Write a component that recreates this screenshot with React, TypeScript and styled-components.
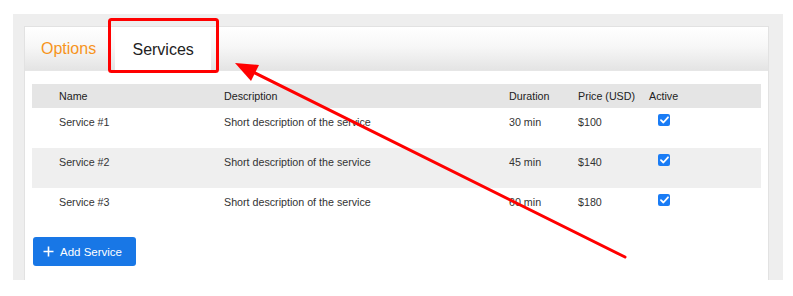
import React from "react";
import styled, { createGlobalStyle } from "styled-components";

const Global = createGlobalStyle`
  html, body { margin: 0; padding: 0; background: #ffffff; }
  body { font-family: "Liberation Sans", Arial, Helvetica, sans-serif; }
  * { box-sizing: border-box; }
`;

const Page = styled.div`
  position: relative;
  width: 793px;
  height: 296px;
  padding: 14px 10px 0 13px;
`;

const Frame = styled.div`
  width: 770px;
  height: 266px;
  background: #eeeeee;
  padding: 12px 14px 0 11px;
`;

const Card = styled.div`
  height: 254px;
  background: #ffffff;
  border: 1px solid #e2e2e2;
  border-bottom: none;
  display: flex;
  flex-direction: column;
`;

const TabBar = styled.div`
  height: 44px;
  display: flex;
  align-items: flex-end;
  background: linear-gradient(#ffffff 0%, #f7f7f7 45%, #e4e4e4 100%);
  border-bottom: 1px solid #e6e6e6;
`;

const Tab = styled.div<{ $active?: boolean }>`
  height: 43px;
  display: flex;
  align-items: center;
  justify-content: center;
  font-size: 16px;
  padding: 0 ${(p) => (p.$active ? "18px" : "19px")} 0 ${(p) => (p.$active ? "18px" : "16px")};
  width: ${(p) => (p.$active ? "96px" : "auto")};
  margin-bottom: ${(p) => (p.$active ? "-1px" : "0")};
  color: ${(p) => (p.$active ? "#222222" : "#f7941d")};
  background: ${(p) => (p.$active ? "#ffffff" : "transparent")};
`;

const Content = styled.div`
  padding: 13px 7px 0 7px;
  display: flex;
  flex-direction: column;
`;

const Row = styled.div<{ $variant: "head" | "white" | "gray" }>`
  display: grid;
  grid-template-columns: 165px 285px 69px 71px 1fr;
  padding-left: 27px;
  font-size: 10.7px;
  line-height: 13px;
  color: ${(p) => (p.$variant === "head" ? "#222222" : "#333333")};
  height: ${(p) => (p.$variant === "head" ? "24px" : "40px")};
  align-items: ${(p) => (p.$variant === "head" ? "center" : "start")};
  padding-top: ${(p) => (p.$variant === "head" ? "0" : "8px")};
  background: ${(p) =>
    p.$variant === "head" ? "#e5e5e5" : p.$variant === "gray" ? "#efefef" : "#ffffff"};
`;

const Cell = styled.div`
  white-space: nowrap;
`;

const CheckCell = styled.div`
  display: flex;
  padding-left: 9px;
  margin-top: -2px;
`;

const Check = styled.span`
  display: inline-flex;
  align-items: center;
  justify-content: center;
  width: 12px;
  height: 12px;
  border-radius: 2px;
  background: #1a7cf5;
`;

const Footer = styled.div`
  padding: 9px 0 0 1px;
`;

const AddButton = styled.button`
  display: inline-flex;
  align-items: center;
  gap: 6px;
  height: 29px;
  width: 103px;
  padding: 0 0 0 10px;
  border: none;
  border-radius: 3px;
  background: #1877e6;
  color: #ffffff;
  font-family: "Liberation Sans", Arial, sans-serif;
  font-size: 11.5px;
`;

const Annotation = styled.svg`
  position: absolute;
  left: 0;
  top: 0;
  pointer-events: none;
`;

const services = [
  { name: "Service #1", dur: "30 min", price: "$100" },
  { name: "Service #2", dur: "45 min", price: "$140" },
  { name: "Service #3", dur: "60 min", price: "$180" },
];

export default function App() {
  return (
    <>
      <Global />
      <Page>
        <Frame>
          <Card>
            <TabBar>
              <Tab>Options</Tab>
              <Tab $active>Services</Tab>
            </TabBar>
            <Content>
              <Row $variant="head">
                <Cell>Name</Cell>
                <Cell>Description</Cell>
                <Cell>Duration</Cell>
                <Cell>Price (USD)</Cell>
                <Cell>Active</Cell>
              </Row>
              {services.map((s, i) => (
                <Row key={s.name} $variant={i % 2 === 1 ? "gray" : "white"}>
                  <Cell>{s.name}</Cell>
                  <Cell>Short description of the service</Cell>
                  <Cell>{s.dur}</Cell>
                  <Cell>{s.price}</Cell>
                  <CheckCell>
                    <Check>
                      <svg width="9" height="8" viewBox="0 0 9 8">
                        <path d="M1 4.2 L3.4 6.5 L8 1.3" fill="none" stroke="#fff" strokeWidth="1.8" strokeLinecap="round" strokeLinejoin="round" />
                      </svg>
                    </Check>
                  </CheckCell>
                </Row>
              ))}
              <Footer>
                <AddButton>
                  <svg width="11" height="11" viewBox="0 0 11 11">
                    <path d="M5.5 0.5 V10.5 M0.5 5.5 H10.5" stroke="#fff" strokeWidth="1.6" />
                  </svg>
                  Add Service
                </AddButton>
              </Footer>
            </Content>
          </Card>
        </Frame>
        <Annotation width="793" height="296" viewBox="0 0 793 296">
          <rect x="109.5" y="19.5" width="108" height="52" rx="2" fill="none" stroke="#ff0000" strokeWidth="3" />
          <line x1="625" y1="257" x2="250" y2="70.5" stroke="#ff0000" strokeWidth="3" strokeLinecap="round" />
          <polygon points="235,63 251,81 259,65" fill="#ff0000" />
        </Annotation>
      </Page>
    </>
  );
}
